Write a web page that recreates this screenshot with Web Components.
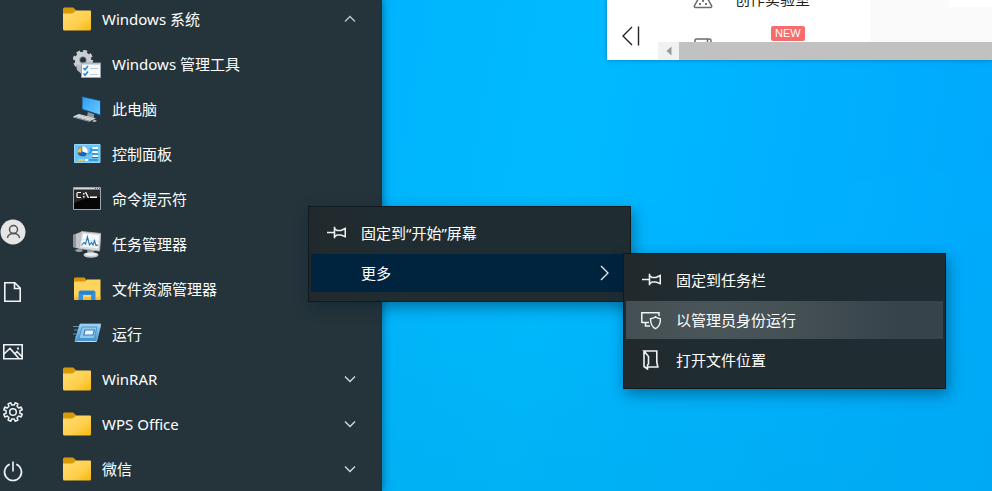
<!DOCTYPE html>
<html lang="zh-CN">
<head>
<meta charset="utf-8">
<meta name="viewport" content="width=device-width, initial-scale=1">
<title>开始</title>
<style>
  html, body { height: 100%; }
  body {
    margin: 0;
    overflow: hidden;
    font: 15px/20px "Noto Sans", "Noto Sans CJK SC", sans-serif;
    color: #fff;
  }
</style>
</head>
<body>

<win-desktop>
  <app-window slot="window">
    <side-item icon="flask">创作实验室</side-item>
    <side-item icon="box" badge="NEW"></side-item>
  </app-window>

  <start-menu slot="start">
    <rail-button slot="rail" icon="user" label="帐户"></rail-button>
    <rail-button slot="rail" icon="document" label="文档"></rail-button>
    <rail-button slot="rail" icon="picture" label="图片"></rail-button>
    <rail-button slot="rail" icon="gear" label="设置"></rail-button>
    <rail-button slot="rail" icon="power" label="电源"></rail-button>

    <app-row icon="folder" chevron="up">Windows 系统</app-row>
    <app-row icon="tools" nested>Windows 管理工具</app-row>
    <app-row icon="pc" nested>此电脑</app-row>
    <app-row icon="panel" nested>控制面板</app-row>
    <app-row icon="cmd" nested>命令提示符</app-row>
    <app-row icon="taskmgr" nested>任务管理器</app-row>
    <app-row icon="explorer" nested>文件资源管理器</app-row>
    <app-row icon="run" nested>运行</app-row>
    <app-row icon="folder" chevron="down">WinRAR</app-row>
    <app-row icon="folder" chevron="down">WPS Office</app-row>
    <app-row icon="folder" chevron="down">微信</app-row>
  </start-menu>

  <context-menu slot="menu" style="--x: 308px; --y: 206px">
    <menu-item icon="pin">固定到“开始”屏幕</menu-item>
    <menu-item state="open" submenu>更多</menu-item>
  </context-menu>
  <context-menu slot="menu" style="--x: 623px; --y: 253px">
    <menu-item icon="pin">固定到任务栏</menu-item>
    <menu-item icon="admin" state="hover">以管理员身份运行</menu-item>
    <menu-item icon="location">打开文件位置</menu-item>
  </context-menu>
</win-desktop>

<script>
(function () {

  // [viewBox size, markup]
  const icons = {
    folder: [28, `
      <defs><linearGradient id="g" x1="0" y1="0" x2="1" y2="1">
        <stop offset="0" stop-color="#ffdc70"/><stop offset=".6" stop-color="#ffcf4d"/><stop offset="1" stop-color="#f5b70c"/>
      </linearGradient></defs>
      <path d="M0 10V4a1.5 1.5 0 0 1 1.5-1.500h8.500l3.500 3v4z" fill="#d79b0a"/>
      <path d="M0 8.500h9.500l4-3H27a1 1 0 0 1 1 1V24a1.500 1.500 0 0 1-1.500 1.500h-25A1.500 1.500 0 0 1 0 24z" fill="url(#g)"/>`],
    tools: [28, `
      <g fill="none" stroke="#c9ced2">
        <circle cx="10" cy="10" r="5.8" stroke-width="5"/>
        <circle cx="10" cy="10" r="8.7" stroke-width="2.8" stroke-dasharray="3.8 3.03"/>
        <circle cx="10" cy="10" r="3.4" stroke="#9da4a9" stroke-width=".8"/>
      </g>
      <path d="M3 14l1 6 4 3.500V16z" fill="#b5bbbf"/>
      <path d="M8.500 13h19v14.500h-19z" fill="#f7f9fb" stroke="#9aa3ab"/>
      <path d="M8.500 13h19v1.500h-19z" fill="#aebbc8"/>
      <path d="M10.500 18l1.500 1.800 3-3.800M10.500 23.500l1.500 1.800 3-3.800" fill="none" stroke="#2188e0" stroke-width="1.600"/>
      <path d="M17 18.500h8M17 24.500h8" stroke="#c3c9ce"/>`],
    pc: [28, `
      <defs><linearGradient id="g" x1="0" y1="0" x2="1" y2="1">
        <stop offset="0" stop-color="#2e9dee"/><stop offset="1" stop-color="#6ccaff"/>
      </linearGradient></defs>
      <path d="M15 16l6 3v4l-7-1z" fill="#8d979e"/>
      <path d="M8.500 1L28 5v16.500L8.500 15z" fill="#1a466a"/>
      <path d="M9.500 2L27 6v13.500L9.500 14z" fill="url(#g)"/>
      <path d="M6 19l17 4.500-6 2.500L0 21.500z" fill="#dfe2e4"/>
      <path d="M0 21.500L17 26v1L0 22.500z" fill="#999fa3"/>
      <path d="M3 21l16 4M6 20l15 4" stroke="#a9aeb2" stroke-width=".6"/>
      <path d="M19 26l3-1 2 1-3 1z" fill="#d3d6d8"/>`],
    panel: [28, `
      <path d="M1.500 4.500h25.500v18H1.500z" fill="#68c4f5" stroke="#8fd6fa"/>
      <circle cx="9.500" cy="11.500" r="5" fill="#fff"/>
      <path d="M9.500 11.500V6.500a5 5 0 1 0 4.700 6.700z" fill="#1767b8"/>
      <path d="M9.500 11.500V6.500a5 5 0 0 1 5 5z" fill="#fff"/>
      <path d="M8.500 12.500V7a5.500 5.500 0 0 0-4 5.500z" fill="#ffb92e"/>
      <path d="M19.500 8H25M19.500 12H25M19.500 16H25" stroke="#fff" stroke-width="2"/>
      <path d="M19 10h6M19 14h6M19 17.500h6M15.500 14l2.500-2V8" stroke="#1b71bb" fill="none"/>
      <path d="M5 20h6" stroke="#e8c85c" stroke-width="2"/><path d="M12 20h3" stroke="#fff" stroke-width="2"/>
      <path d="M16 20h9" stroke="#1973bd"/>`],
    cmd: [28, `
      <path d="M.5 2.500h27v22H.5z" fill="#050505" stroke="#a1a8ac"/>
      <path d="M1 3h26v9c-9 0-18 2-26 6z" fill="#2a2a2a"/>
      <path d="M1 3h26v1.500H1z" fill="#d5d9db"/>
      <path d="M22 3.500h1M24 3.500h1M26 3.500h1" stroke="#596066"/>
      <path d="M8 7.500H5a1 1 0 0 0-1 1v3a1 1 0 0 0 1 1h3" fill="none" stroke="#fff" stroke-width="1.200"/>
      <path d="M10 8h1.500v1.500H10zM10 11h1.500v1.500H10zM17 11.500h7V13h-7z" fill="#fff"/>
      <path d="M12.500 7l3 6" stroke="#fff" stroke-width="1.300"/>`],
    taskmgr: [28, `
      <path d="M0 5l9-3.500v18L0 17z" fill="#c2c6c8"/><path d="M0 5l3-1v14l-3-1z" fill="#8f979b"/>
      <path d="M14 20h7l-1 5h-5z" fill="#8d9296"/>
      <ellipse cx="18" cy="25" rx="7.500" ry="2.700" fill="#c4c7c9"/>
      <ellipse cx="18" cy="24.300" rx="6" ry="1.700" fill="#ececec"/>
      <path d="M2 20c3-2 7-1 8 1l-3 1c-2 0-4 0-5-2z" fill="#9ba1a4"/>
      <path d="M8.500 1.500L28 3.500l-1.500 17.500L6 18.500z" fill="#d8dbdc" stroke="#b2b8bb" stroke-width=".8"/>
      <path d="M10 3.500l16 1.800-1 13L8 16.500z" fill="#f6fbff"/>
      <path d="M9 9.500l16 1.500M9 13.500l16 1.300M14 4.500v12.500M20 5.500v12" stroke="#c5d9e8" stroke-width=".5"/>
      <path d="M8.500 15.500l2.500-3 1.500 1.500L14.500 7l2 8 2-2.500 1.500 2.500 1.500-4.500 1.500 5 2-.5" fill="none" stroke="#2f73ad" stroke-width="1.100"/>`],
    explorer: [28, `
      <path d="M1 8V3.500A1 1 0 0 1 2 2.500h9.500l2 2.500v3z" fill="#d6950c"/>
      <path d="M1 6.500h11l2-2h13.500V24a1 1 0 0 1-1 1H2a1 1 0 0 1-1-1z" fill="#ffd45c"/>
      <path d="M1 22h26.500v2a1 1 0 0 1-1 1H2a1 1 0 0 1-1-1z" fill="#f7bd35"/>
      <path d="M5.500 25v-7.500A2 2 0 0 1 7.500 15.500h13a2 2 0 0 1 2 2V25H18v-5h-8v5z" fill="#3492db"/>
      <path d="M7 16h14v3H7z" fill="#2c82cb"/>`],
    run: [28, `
      <defs><linearGradient id="g" x1="0" y1="0" x2="0" y2="1">
        <stop offset="0" stop-color="#a4d6f4"/><stop offset="1" stop-color="#3c91d0"/>
      </linearGradient></defs>
      <path d="M0 6.500h8M1 10h5M0 14h5M2 17h3" stroke="#5f91b1" stroke-width="1.200"/>
      <path d="M7 4h21l-4.500 17.500H2z" fill="url(#g)" stroke="#8dc6ea" stroke-width=".8"/>
      <path d="M9 7h15l-3 11.500H6z" fill="#8cc9ec" stroke="#3d8cc8" stroke-width=".8"/>
      <path d="M11.500 9.500h10.500l-1.500 6H10z" fill="#3f7fc0"/>
      <path d="M12.500 10.500h8l-1 4h-8z" fill="#eef7ff"/>
      <path d="M4 21.500h19" stroke="#c0e5fb"/>`],
    user: [26, `
      <circle cx="13" cy="13" r="12.500" fill="#e5e5e5"/>
      <g fill="none" stroke="#504c4c" stroke-width="1.400">
        <circle cx="13.500" cy="10.500" r="4"/><path d="M7.500 19c.3-6 11.700-6 12 0"/>
      </g>`],
    document: [26, `<path d="M4.800 3.800h10l5.400 5.400v13H4.800zM14.500 4v5.500H20" fill="none" stroke="#eef4f5" stroke-width="1.600"/>`],
    picture: [26, `
      <g fill="none" stroke="#eef4f5" stroke-width="1.600">
        <path d="M3.800 5.800h18.400v14H3.800zM4 15l6-5.500 8.500 9.500M14.500 15.200l2.500-2.500 5 5"/>
      </g>
      <path d="M17 8.500h2v2h-2z" fill="#eef4f5"/>`],
    gear: [26, `
      <g fill="none" stroke="#eef4f5" stroke-width="1.500" stroke-linejoin="round">
        <circle cx="13" cy="13" r="3.300"/>
        <path d="${gearPath(13, 13, 7, 9.5, 8)}"/>
      </g>`],
    power: [26, `<path d="M9.700 5.200a8.500 8.500 0 1 0 6.600 0M13 2.500v10" fill="none" stroke="#eef4f5" stroke-width="1.600"/>`],
    up: [12, `<path d="M1 8.500l5-5 5 5" fill="none" stroke="#c0c8cb" stroke-width="1.300"/>`],
    down: [12, `<path d="M1 3.500l5 5 5-5" fill="none" stroke="#d6dddf" stroke-width="1.300"/>`],
    right: [16, `<path d="M5 1l7 7-7 7" fill="none" stroke="#e8eef2" stroke-width="1.300"/>`],
    pin: [20, `<path d="M1 9.500h7M8.500 3.800v11.400M8.500 5.500l2.500 2h4l4.300-2v8.200l-4.300-1.700h-4l-2.500 2" fill="none" stroke="#eef4f5" stroke-width="1.600"/>`],
    admin: [20, `
      <path d="M.8 13V2.800h17.200V6M.8 12.500H8M4.500 12.500v3.500H9" fill="none" stroke="#eef4f5" stroke-width="1.500"/>
      <path d="M14.500 6.800c1.500 1.300 3 1.800 5 1.900 0 4.500-1 8-5 10-4-2-5-5.500-5-10 2-.1 3.500-.6 5-1.900z" fill="none" stroke="#eef4f5" stroke-width="1.400"/>`],
    location: [20, `<path d="M3 1v15.500l3.500 2.500V15l1-1V6.500L3 1h12.800v11l1 5H6.500" fill="none" stroke="#eef4f5" stroke-width="1.600"/>`],
    flask: [20, `
      <path d="M7 1v6L1.500 16.500c-.5 1 0 2 1 2h15c1 0 1.500-1 1-2L13 7V1" fill="none" stroke="#6b6b6b" stroke-width="1.500"/>
      <path d="M6 14h2v2H6zM12 14h2v2h-2zM9 11h2v2H9z" fill="#777"/>`],
    box: [20, `<path d="M2 18V6.500A1.500 1.500 0 0 1 3.500 5h13A1.500 1.500 0 0 1 18 6.500V18zM14.500 5v4" fill="none" stroke="#6b6b6b" stroke-width="1.500"/>`],
    collapse: [20, `<path d="M11 1L2 10l9 9M17.500 .5v19" fill="none" stroke="#222" stroke-width="1.400"/>`],
    scrollLeft: [10, `<path d="M7.500 .5v9L2.500 5z" fill="#9a9a9a"/>`]
  }

  function gearPath (cx, cy, inner, outer, teeth) {
    const point = (r, a) => (cx + r * Math.cos(a)).toFixed(2) + ' ' + (cy + r * Math.sin(a)).toFixed(2)
    const step = Math.PI * 2 / teeth
    const parts = []
    for (let i = 0; i < teeth; i++) {
      const a = i * step + step / 2
      parts.push(point(inner, a - step * 0.28), point(outer, a - step * 0.2))
      parts.push(point(outer, a + step * 0.2), point(inner, a + step * 0.28))
    }
    return 'M' + parts.join('L') + 'Z'
  }

  function define (name, render) {
    customElements.define(name, class extends HTMLElement {
      constructor () {
        super()
        this.attachShadow({ mode: 'open' })
      }

      connectedCallback () {
        this.shadowRoot.innerHTML = render(this)
      }
    })
  }

  define('sys-icon', (el) => {
    const [box, markup] = icons[el.getAttribute('name')]
    return `
      <style>
        :host { display: block; flex: none; }
        svg { display: block; }
      </style>
      <svg width="${box}" height="${box}" viewBox="0 0 ${box} ${box}" aria-hidden="true">${markup}</svg>`
  })

  define('win-desktop', () => `
    <style>
      :host {
        display: flex;
        position: relative;
        height: 100vh;
        overflow: hidden;
        background:
          linear-gradient(180deg, transparent 45%, rgba(0, 168, 228, .4)),
          linear-gradient(100deg, #00b5fd 38%, #00baff 55%, #00b1ff 75%, #00a7fb);
      }
      .beam {
        position: absolute;
        inset: 0;
        width: 100%;
        height: 100%;
      }
    </style>
    <svg class="beam" viewBox="0 0 992 491" preserveAspectRatio="none" aria-hidden="true">
      <path d="M600 210L992 165V491H600z" fill="#00b8ff" opacity=".15"/>
    </svg>
    <slot name="start"></slot>
    <slot name="window"></slot>
    <slot name="menu"></slot>`)

  define('start-menu', () => `
    <style>
      :host {
        display: flex;
        position: relative;
        box-sizing: border-box;
        width: 382px;
        gap: 37px;
        background: #25343b;
        box-shadow: 1px 0 8px rgba(0, 40, 70, .5);
      }
      nav, main {
        display: flex;
        flex-direction: column;
        justify-content: flex-end;
      }
      nav { gap: 22px; }
      main { flex: 1; }
    </style>
    <nav><slot name="rail"></slot></nav>
    <main><slot></slot></main>`)

  define('rail-button', (el) => `
    <style>
      :host { display: block; }
      button {
        display: flex;
        align-items: center;
        height: 38px;
        padding: 0;
        border: 0;
        background: none;
      }
    </style>
    <button type="button" aria-label="${el.getAttribute('label')}">
      <sys-icon name="${el.getAttribute('icon')}"></sys-icon>
    </button>`)

  define('app-row', (el) => {
    const chevron = el.getAttribute('chevron')
    return `
      <style>
        :host { display: block; flex: none; }
        :host([nested]) { padding-left: 10px; }
        button {
          display: flex;
          align-items: center;
          gap: 11px;
          width: 100%;
          height: 45px;
          padding: 0 26px 0 0;
          border: 0;
          background: none;
          color: inherit;
          font: inherit;
          text-align: left;
        }
        span { flex: 1; }
      </style>
      <button type="button"${chevron ? ` aria-expanded="${chevron === 'up'}"` : ''}>
        <sys-icon name="${el.getAttribute('icon')}"></sys-icon>
        <span><slot></slot></span>
        ${chevron ? `<sys-icon name="${chevron}"></sys-icon>` : ''}
      </button>`
  })

  define('context-menu', () => `
    <style>
      :host {
        display: flex;
        flex-direction: column;
        gap: 2px;
        position: absolute;
        left: var(--x);
        top: var(--y);
        box-sizing: border-box;
        width: 323px;
        padding: 7px 2px 9px;
        border: 1px solid #10191d;
        background: linear-gradient(90deg, #22292c, #1f2d33 30%);
        box-shadow: 2px 5px 14px rgba(0, 30, 50, .45);
      }
    </style>
    <slot></slot>`)

  define('menu-item', (el) => {
    const icon = el.getAttribute('icon')
    return `
      <style>
        :host { display: block; }
        button {
          display: grid;
          grid-template-columns: 20px 1fr auto;
          align-items: center;
          gap: 15px;
          width: 100%;
          height: 38px;
          padding: 0 16px 0 15px;
          border: 0;
          background: none;
          color: inherit;
          font: inherit;
          text-align: left;
        }
        :host([state="open"]) button { background: #00233e; }
        :host([state="hover"]) button {
          background: radial-gradient(circle at 28% 50%, #4b565a, #455055 35%, #36434a 80%);
        }
      </style>
      <button type="button" role="menuitem">
        ${icon ? `<sys-icon name="${icon}"></sys-icon>` : '<i></i>'}
        <span><slot></slot></span>
        ${el.hasAttribute('submenu') ? '<sys-icon name="right"></sys-icon>' : ''}
      </button>`
  })

  define('app-window', () => `
    <style>
      :host {
        display: flex;
        position: absolute;
        top: 0;
        left: 607px;
        right: 0;
        height: 60px;
        background: #fff;
        color: #222;
        box-shadow: 0 0 4px rgba(0, 60, 110, .5);
      }
      button {
        display: grid;
        place-items: center;
        padding: 0;
        border: 0;
        background: none;
      }
      .collapse {
        box-sizing: border-box;
        width: 51px;
        padding: 12px 4px 0 0;
      }
      .view {
        display: flex;
        flex: 1;
        flex-direction: column;
      }
      .page {
        display: flex;
        height: 42px;
        overflow: hidden;
        background: #fafafa;
      }
      .items {
        display: flex;
        flex-direction: column;
        justify-content: center;
        width: 212px;
        background: #fff;
      }
      .card {
        flex: 1;
        height: 7px;
        margin-left: 79px;
        background: #fff;
      }
      .scrollbar {
        display: flex;
        height: 18px;
        background: #c1c1c1;
      }
      .scrollbar button { width: 21px; background: #f1f1f1; }
    </style>
    <button class="collapse" type="button" aria-label="收起"><sys-icon name="collapse"></sys-icon></button>
    <div class="view">
      <div class="page">
        <div class="items"><slot></slot></div>
        <div class="card"></div>
      </div>
      <div class="scrollbar">
        <button type="button" aria-label="向左滚动"><sys-icon name="scrollLeft"></sys-icon></button>
      </div>
    </div>`)

  define('side-item', (el) => {
    const badge = el.getAttribute('badge')
    return `
      <style>
        :host {
          display: flex;
          position: relative;
          flex: none;
          align-items: center;
          gap: 22px;
          height: 45px;
          padding-left: 35px;
        }
        b {
          position: absolute;
          left: 113px;
          top: 5px;
          padding: 0 4px;
          border-radius: 2px;
          background: #f76c6c;
          color: #fff;
          font: 11px/15px "Liberation Sans", sans-serif;
        }
      </style>
      <sys-icon name="${el.getAttribute('icon')}"></sys-icon>
      <span><slot></slot></span>
      ${badge ? `<b>${badge}</b>` : ''}`
  })
})()
</script>
</body>
</html>
